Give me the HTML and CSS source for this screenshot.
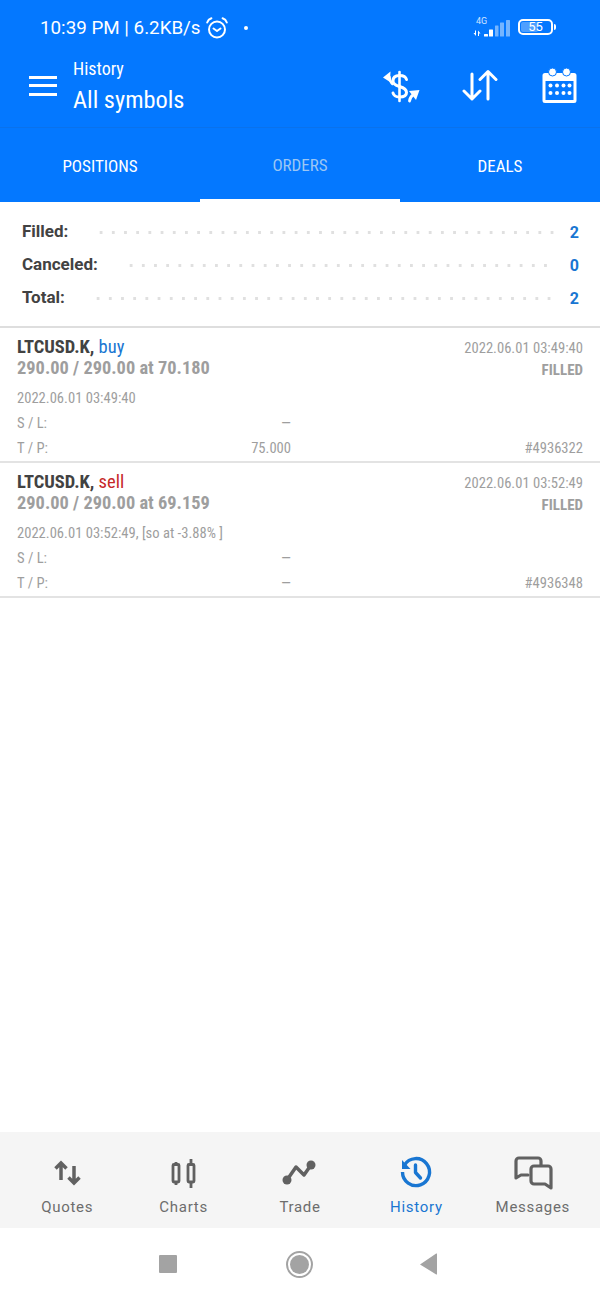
FILE: index.html
```html
<!DOCTYPE html>
<html lang="en">
<head>
<meta charset="utf-8">
<title>History</title>
<link rel="stylesheet" href="styles.css">
</head>
<body>
<div class="phone">
  <header class="appbar">
    <div class="status">
      <span class="status-text">10:39 PM | 6.2KB/s</span>
      <svg class="alarm" width="24" height="24" viewBox="0 0 24 24" fill="none" stroke="#fff" stroke-width="2" stroke-linecap="round" stroke-linejoin="round"><circle cx="12" cy="13.500" r="8"/><path d="M8.500 12.500l3.500 2.500 3.500-2.500"/><path d="M2.200 6.500Q3.200 3.400 6.400 2.300M21.800 6.500Q20.800 3.400 17.600 2.300"/></svg>
      <span class="status-dot"></span>
      <span class="status-spacer"></span>
      <span class="net">
        <span class="net-label">4G</span>
        <svg width="37" height="18" viewBox="0 0 37 18" fill="#fff"><path d="M3 11.500v5.500l-2.500-3h1.500v-2.500zM5 17v-5.500l2.500 3H6V17z"/><rect x="11" y="15" width="4" height="2.500" rx=".5"/><rect x="16" y="10.500" width="4" height="7" rx=".5"/><rect x="22" y="6.500" width="3.500" height="11" rx=".5" opacity=".45"/><rect x="27" y="3.500" width="4" height="14" rx=".5" opacity=".45"/><rect x="33" y="1" width="4" height="16.500" rx=".5" opacity=".45"/></svg>
      </span>
      <span class="battery"><span class="battery-fill"></span><span class="battery-num">55</span></span>
      <span class="battery-cap"></span>
    </div>
    <div class="toolbar">
      <span class="menu"><i></i><i></i><i></i></span>
      <div class="titles">
        <div class="title-small">History</div>
        <div class="title-large">All symbols</div>
      </div>
      <div class="actions">
        <svg width="40" height="40" viewBox="0 0 40 40" fill="none" stroke="#fff" stroke-linecap="round" stroke-linejoin="round"><path d="M18.500 6v29" stroke-width="2.600"/><path d="M25.500 13.500Q24.500 9.500 18.500 9.500Q12 9.500 12 15Q12 18.500 18.500 20.500Q25.500 22.500 25.500 26.500Q25.500 31 18.500 31Q13 31 12 27" stroke-width="3"/><path d="M2 11.500L9.500 5.500 9 16z" fill="#fff" stroke="none"/><path d="M8.500 11Q8.500 15 11.500 18" stroke-width="2.500"/><path d="M38.500 24L28 25 35 34z" fill="#fff" stroke="none"/><path d="M32 29Q29 31 28.500 35" stroke-width="2.800"/></svg>
        <svg width="36" height="34" viewBox="0 0 36 34" fill="none" stroke="#fff" stroke-width="3" stroke-linecap="round" stroke-linejoin="round"><path d="M10 5v25M2 22l8 8 8-8"/><path d="M26 30V2.500M18 10.500l8-8 8 8"/></svg>
        <svg class="calendar" width="36" height="36" viewBox="0 0 36 36" fill="#fff"><path fill-rule="evenodd" d="M3 5h29a2.500 2.500 0 0 1 2.500 2.500v25A2.500 2.500 0 0 1 32 35H3a2.500 2.500 0 0 1-2.500-2.500v-25A2.500 2.500 0 0 1 3 5zM3.500 13v19h28V13z"/><circle cx="10.500" cy="4" r="4" stroke="#0478ff"/><circle cx="24.500" cy="4" r="4" stroke="#0478ff"/><circle cx="8.500" cy="17.500" r="2"/><circle cx="15" cy="17.500" r="2"/><circle cx="21.500" cy="17.500" r="2"/><circle cx="27.500" cy="17.500" r="2"/><circle cx="8.500" cy="25" r="2"/><circle cx="15" cy="25" r="2"/><circle cx="21.500" cy="25" r="2"/><circle cx="27.500" cy="25" r="2"/></svg>
      </div>
    </div>
    <nav class="tabs">
      <div class="tab">POSITIONS</div>
      <div class="tab tab-active">ORDERS</div>
      <div class="tab">DEALS</div>
    </nav>
  </header>

  <section class="summary">
    <div class="sum-row"><span class="sum-label">Filled:</span><span class="dots"></span><span class="sum-val">2</span></div>
    <div class="sum-row"><span class="sum-label">Canceled:</span><span class="dots"></span><span class="sum-val">0</span></div>
    <div class="sum-row"><span class="sum-label">Total:</span><span class="dots"></span><span class="sum-val">2</span></div>
  </section>

  <main class="orders">
    <article class="order">
      <div class="line-head"><span class="symbol">LTCUSD.K, <span class="buy">buy</span></span><span class="time">2022.06.01 03:49:40</span></div>
      <div class="line-vol"><span class="volume">290.00 / 290.00 at 70.180</span><span class="state">FILLED</span></div>
      <div class="line-date">2022.06.01 03:49:40</div>
      <div class="line-meta"><span class="meta-pair"><span>S / L:</span><span>—</span></span></div>
      <div class="line-meta"><span class="meta-pair"><span>T / P:</span><span>75.000</span></span><span>#4936322</span></div>
    </article>
    <article class="order">
      <div class="line-head"><span class="symbol">LTCUSD.K, <span class="sell">sell</span></span><span class="time">2022.06.01 03:52:49</span></div>
      <div class="line-vol"><span class="volume">290.00 / 290.00 at 69.159</span><span class="state">FILLED</span></div>
      <div class="line-date">2022.06.01 03:52:49, [so at -3.88% ]</div>
      <div class="line-meta"><span class="meta-pair"><span>S / L:</span><span>—</span></span></div>
      <div class="line-meta"><span class="meta-pair"><span>T / P:</span><span>—</span></span><span>#4936348</span></div>
    </article>
  </main>

  <nav class="bottom">
    <div class="nav-item">
      <svg width="40" height="36" viewBox="0 0 40 36" fill="none" stroke="#616161" stroke-width="3.500"><path d="M14 24V7.500M8.500 12.500L14 7l5.500 5.500"/><path d="M27 10v16.500M21.500 21.500L27 27l5.500-5.500"/></svg>
      <span>Quotes</span>
    </div>
    <div class="nav-item">
      <svg width="40" height="36" viewBox="0 0 40 36" fill="none" stroke="#616161" stroke-width="2.800"><rect x="9" y="8.500" width="6" height="17.500" rx="1"/><rect x="24" y="8.500" width="6" height="17.500" rx="1"/><path d="M12 6v2.500M12 26v3M27 3v5.500M27 26v6"/></svg>
      <span>Charts</span>
    </div>
    <div class="nav-item">
      <svg width="40" height="36" viewBox="0 0 40 36" fill="#616161" stroke="none"><path d="M7 24L16 11 24 19 31 9" fill="none" stroke="#616161" stroke-width="3.500" stroke-linejoin="round"/><circle cx="7" cy="24" r="4.500"/><circle cx="31" cy="9" r="4.500"/></svg>
      <span>Trade</span>
    </div>
    <div class="nav-item nav-active">
      <svg width="40" height="36" viewBox="0 0 40 36" fill="none" stroke="#1976d2" stroke-width="3.400"><path d="M8.500 9A13.500 13.500 0 1 1 6.500 16"/><path d="M6 4v9h8.500z" fill="#1976d2" stroke="none"/><path d="M19.500 9v7.500l5 5.500" stroke-linecap="round" stroke-linejoin="round"/></svg>
      <span>History</span>
    </div>
    <div class="nav-item">
      <svg width="40" height="36" viewBox="0 0 40 36" fill="none" stroke="#616161" stroke-width="3.200" stroke-linejoin="round" stroke-linecap="round"><path d="M28 9V5a3 3 0 0 0-3-3H6a3 3 0 0 0-3 3v17l5-3h7"/><path d="M21 10h14a3 3 0 0 1 3 3v19l-6-4H21a3 3 0 0 1-3-3V13a3 3 0 0 1 3-3z"/></svg>
      <span>Messages</span>
    </div>
  </nav>

  <div class="sysnav">
    <span class="sys-square"></span>
    <span class="sys-circle"><span></span></span>
    <svg class="sys-back" width="19" height="22" viewBox="0 0 19 22"><path d="M18 1v20a.5.5 0 0 1-.8.4L1 11.500 17.200.6a.5.5 0 0 1 .8.4z" fill="#a3a3a3"/></svg>
  </div>
</div>
</body>
</html>
```
FILE: styles.css
```css
* { box-sizing: border-box; }
html, body { margin: 0; padding: 0; background: #fff; }
body { font-family: "Roboto Condensed", Roboto, sans-serif; }
.phone { width: 600px; height: 1300px; display: flex; flex-direction: column; overflow: hidden; }

.appbar { background: #0478ff; color: #fff; height: 202px; flex: none; display: flex; flex-direction: column; }
.status { height: 54px; padding: 1px 44px 0 40px; display: flex; align-items: center; }
.status-text { font-family: Roboto, sans-serif; font-size: 18.800px; line-height: 24px; }
.alarm { margin-left: 4px; }
.status-dot { width: 4px; height: 4px; border-radius: 50%; background: #fff; margin-left: 15px; }
.status-spacer { flex: 1; }
.net { position: relative; display: flex; width: 37px; height: 18px; margin-right: 8px; margin-top: 1px; }
.net-label { position: absolute; left: 3px; top: -3px; font: 9px/10px Roboto, sans-serif; opacity: .8; }
.battery { position: relative; width: 35px; height: 16px; border: 2px solid #fff; border-radius: 5px; display: flex; align-items: center; justify-content: center; margin-top: -2px; }
.battery-fill { position: absolute; left: 1px; top: 1px; bottom: 1px; width: 17px; background: rgba(255,255,255,.3); border-radius: 2px; }
.battery-num { position: relative; font: 13px/13px Roboto, sans-serif; }
.battery-cap { width: 2px; height: 6px; background: #fff; border-radius: 0 2px 2px 0; margin-left: 1px; margin-top: -2px; }

.toolbar { height: 74px; display: flex; align-items: center; padding: 0 22px 10px 29px; border-bottom: 1px solid #0a72ec; }
.menu { display: flex; flex-direction: column; gap: 5.500px; width: 28px; }
.menu i { display: block; height: 3px; background: #fff; }
.titles { margin-left: 16px; margin-top: 1px; }
.title-small { font-size: 18px; line-height: 24px; }
.title-large { font-size: 24.400px; line-height: 32px; margin-top: 3px; }
.actions { margin-left: auto; display: flex; align-items: center; gap: 41px; }
.calendar { margin-left: 3px; }

.tabs { flex: 1; display: flex; }
.tab { flex: 1; display: flex; align-items: center; justify-content: center; font-size: 17px; padding-top: 1px; }
.tab-active { color: #9cc6f4; border-bottom: 3px solid #fff; padding-top: 3px; }

.summary { height: 126px; padding: 13px 22px 0; border-bottom: 2px solid #dedede; flex: none; }
.sum-row { height: 33px; display: flex; align-items: center; }
.sum-label { font-family: Roboto, sans-serif; font-weight: 700; font-size: 17px; color: #424242; margin-top: -1px; }
.dots { flex: 1; height: 3px; margin: 2px 15px 0 27px; background-image: radial-gradient(circle, #e0e0e0 1.400px, transparent 1.600px); background-size: 12.200px 3px; }
.sum-val { font-family: Roboto, sans-serif; font-weight: 700; font-size: 16px; color: #1976d2; width: 10px; text-align: right; margin-right: -1px; margin-top: 1px; }

.orders { flex: 1; }
.order { height: 135px; padding: 6px 17px 0; border-bottom: 2px solid #e3e3e3; color: #9e9e9e; font-size: 14.600px; }
.line-head, .line-vol, .line-meta { display: flex; justify-content: space-between; align-items: center; }
.line-head { height: 26px; }
.line-vol { height: 18px; margin-top: -2px; }
.symbol { font-size: 18.500px; font-weight: 700; color: #424242; }
.buy, .sell { font-weight: 400; }
.buy { color: #1976d2; }
.sell { color: #c62828; }
.time { font-size: 14.600px; margin-top: 2px; }
.volume { font-size: 18.400px; font-weight: 700; color: #9e9e9e; }
.state { font-size: 15px; font-weight: 700; margin-top: 6px; }
.line-date { height: 24px; margin-top: 10px; line-height: 24px; }
.line-meta { height: 25px; }
.meta-pair { width: 274px; display: flex; justify-content: space-between; }

.bottom { height: 96px; flex: none; background: #f5f5f5; padding: 0 9px; display: flex; }
.nav-item { flex: 1; display: flex; flex-direction: column; align-items: center; padding-top: 24px; font-family: Roboto, sans-serif; font-size: 15px; letter-spacing: .7px; color: #6d6d6d; }
.nav-item span { margin-top: 5px; line-height: 20px; }
.nav-active { color: #1976d2; }

.sysnav { height: 72px; flex: none; display: flex; align-items: center; justify-content: center; padding-right: 3px; }
.sys-square { width: 18px; height: 18px; background: #a3a3a3; border-radius: 1px; margin-right: 109px; }
.sys-circle { width: 27px; height: 27px; border-radius: 50%; border: 2px solid #a3a3a3; padding: 2px; margin-right: 106px; }
.sys-circle span { display: block; width: 100%; height: 100%; border-radius: 50%; background: #a3a3a3; }
```
